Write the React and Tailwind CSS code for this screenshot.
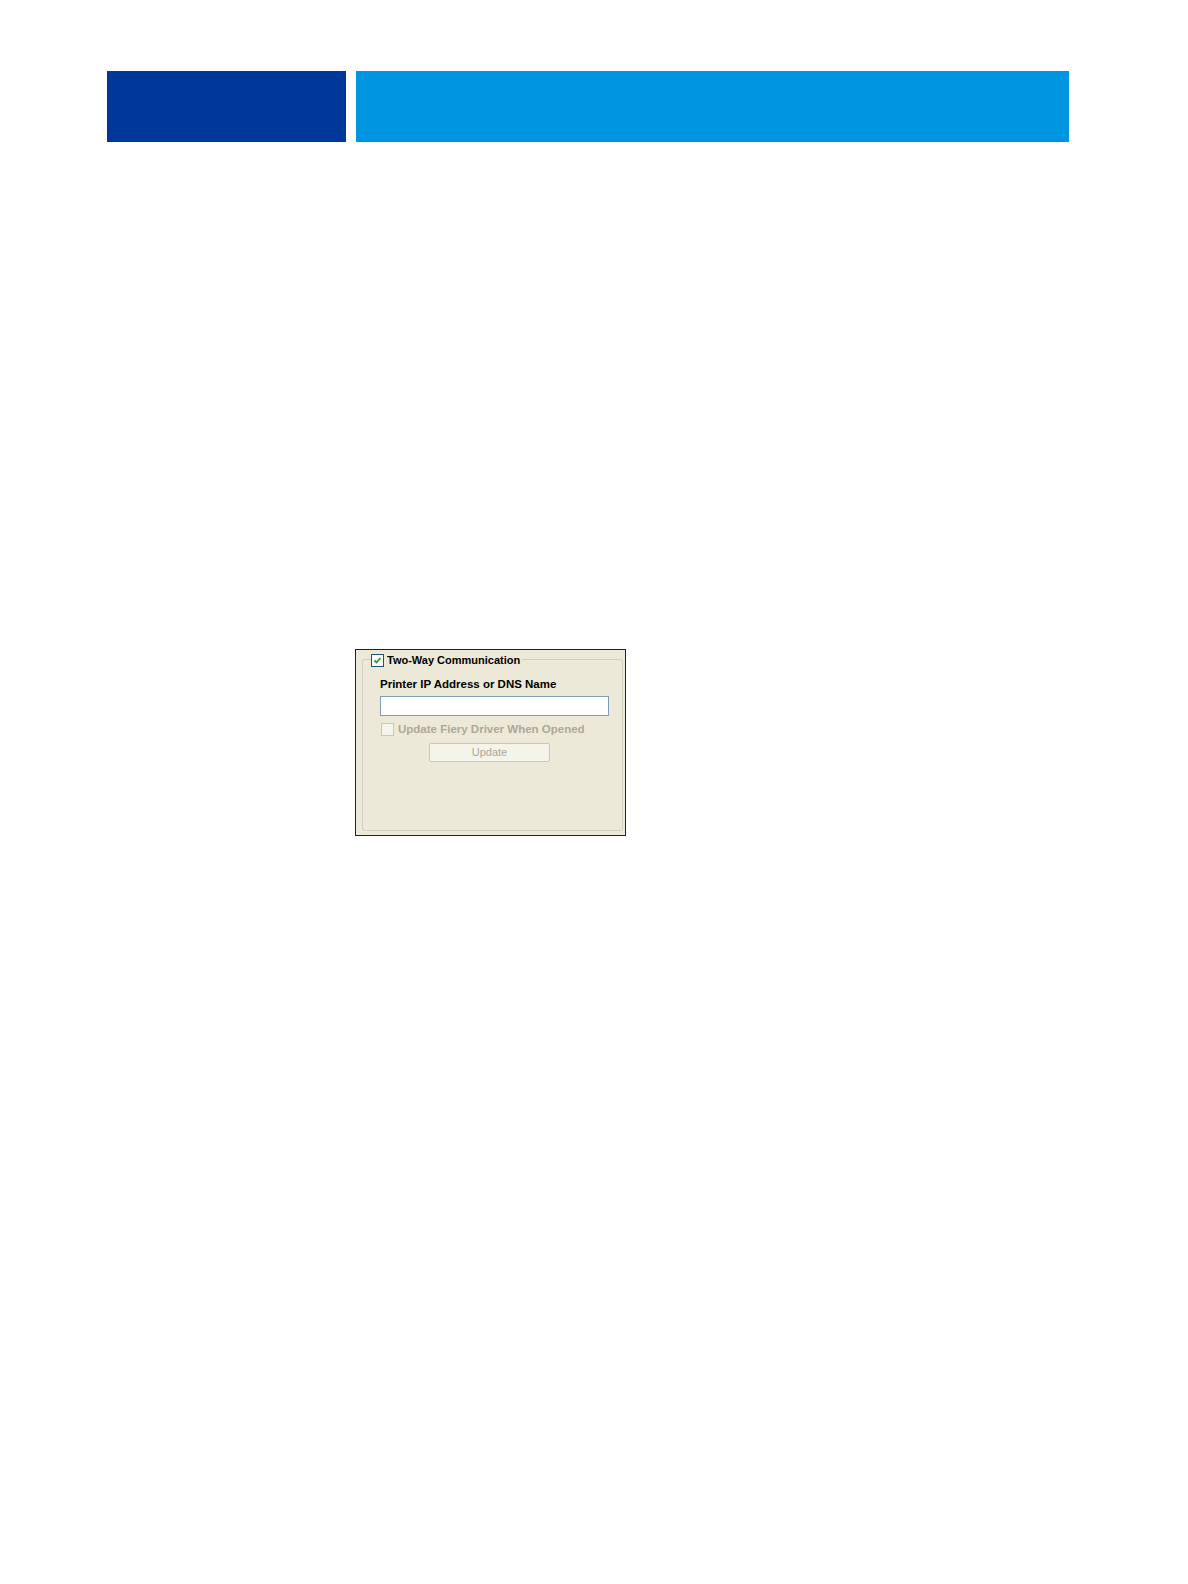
import React from 'react';

const Check = () => (
    <svg width="9" height="9" viewBox="0 0 9 9" className="block">
        <path d="M1.5 4.5 L3.5 6.5 L7.5 2" fill="none" stroke="#21a121" strokeWidth="1.8" />
    </svg>
);

const App = () => {
    return (
        <div className="w-full min-h-screen bg-white pb-[40px]" style={{ fontFamily: '"Liberation Sans", Arial, sans-serif' }}>
            {/* Header bars */}
            <div className="flex pt-[71px] pl-[107px] gap-[10px]">
                <div className="w-[239px] h-[71px] bg-[#003899]"></div>
                <div className="w-[713px] h-[71px] bg-[#0095e0]"></div>
            </div>

            {/* Dialog screenshot */}
            <div className="ml-[355px] mt-[507px] w-[271px] h-[187px] border border-[#222] bg-[#ece9d8] pt-[9px] pl-[6px] pr-[2px] pb-[4px]">
                <div className="relative h-full border border-[#d0d0bf] rounded-[3px]">
                    {/* legend */}
                    <div className="absolute -top-[6px] left-[8px] flex items-center gap-[3px] bg-[#ece9d8] pr-[2px]">
                        <div className="w-[13px] h-[13px] border border-[#1c5180] bg-white flex items-center justify-center">
                            <Check />
                        </div>
                        <span className="text-[11px] font-bold text-black leading-[13px]">Two-Way Communication</span>
                    </div>

                    <div className="pt-[17px] pl-[17px] pr-[12px]">
                        <div className="text-[11.5px] font-bold text-black leading-[14px]">Printer IP Address or DNS Name</div>
                        <div className="mt-[5px] w-[229px] h-[20px] border border-[#7f9db9] bg-white"></div>
                        <div className="mt-[7px] flex items-center gap-[4px] ml-[1px]">
                            <div className="w-[13px] h-[13px] border border-[#cac8bb] bg-[#f5f4ea]"></div>
                            <span className="text-[11.5px] font-bold text-[#aca899] leading-[13px]">Update Fiery Driver When Opened</span>
                        </div>
                        <div className="mt-[7px] ml-[49px] w-[121px] h-[19px] border border-[#cac8bb] rounded-[2px] bg-[#f5f4ea] flex items-center justify-center">
                            <span className="text-[11px] text-[#aca899] leading-[13px]">Update</span>
                        </div>
                    </div>
                </div>
            </div>
        </div>
    );
};

export default App;
